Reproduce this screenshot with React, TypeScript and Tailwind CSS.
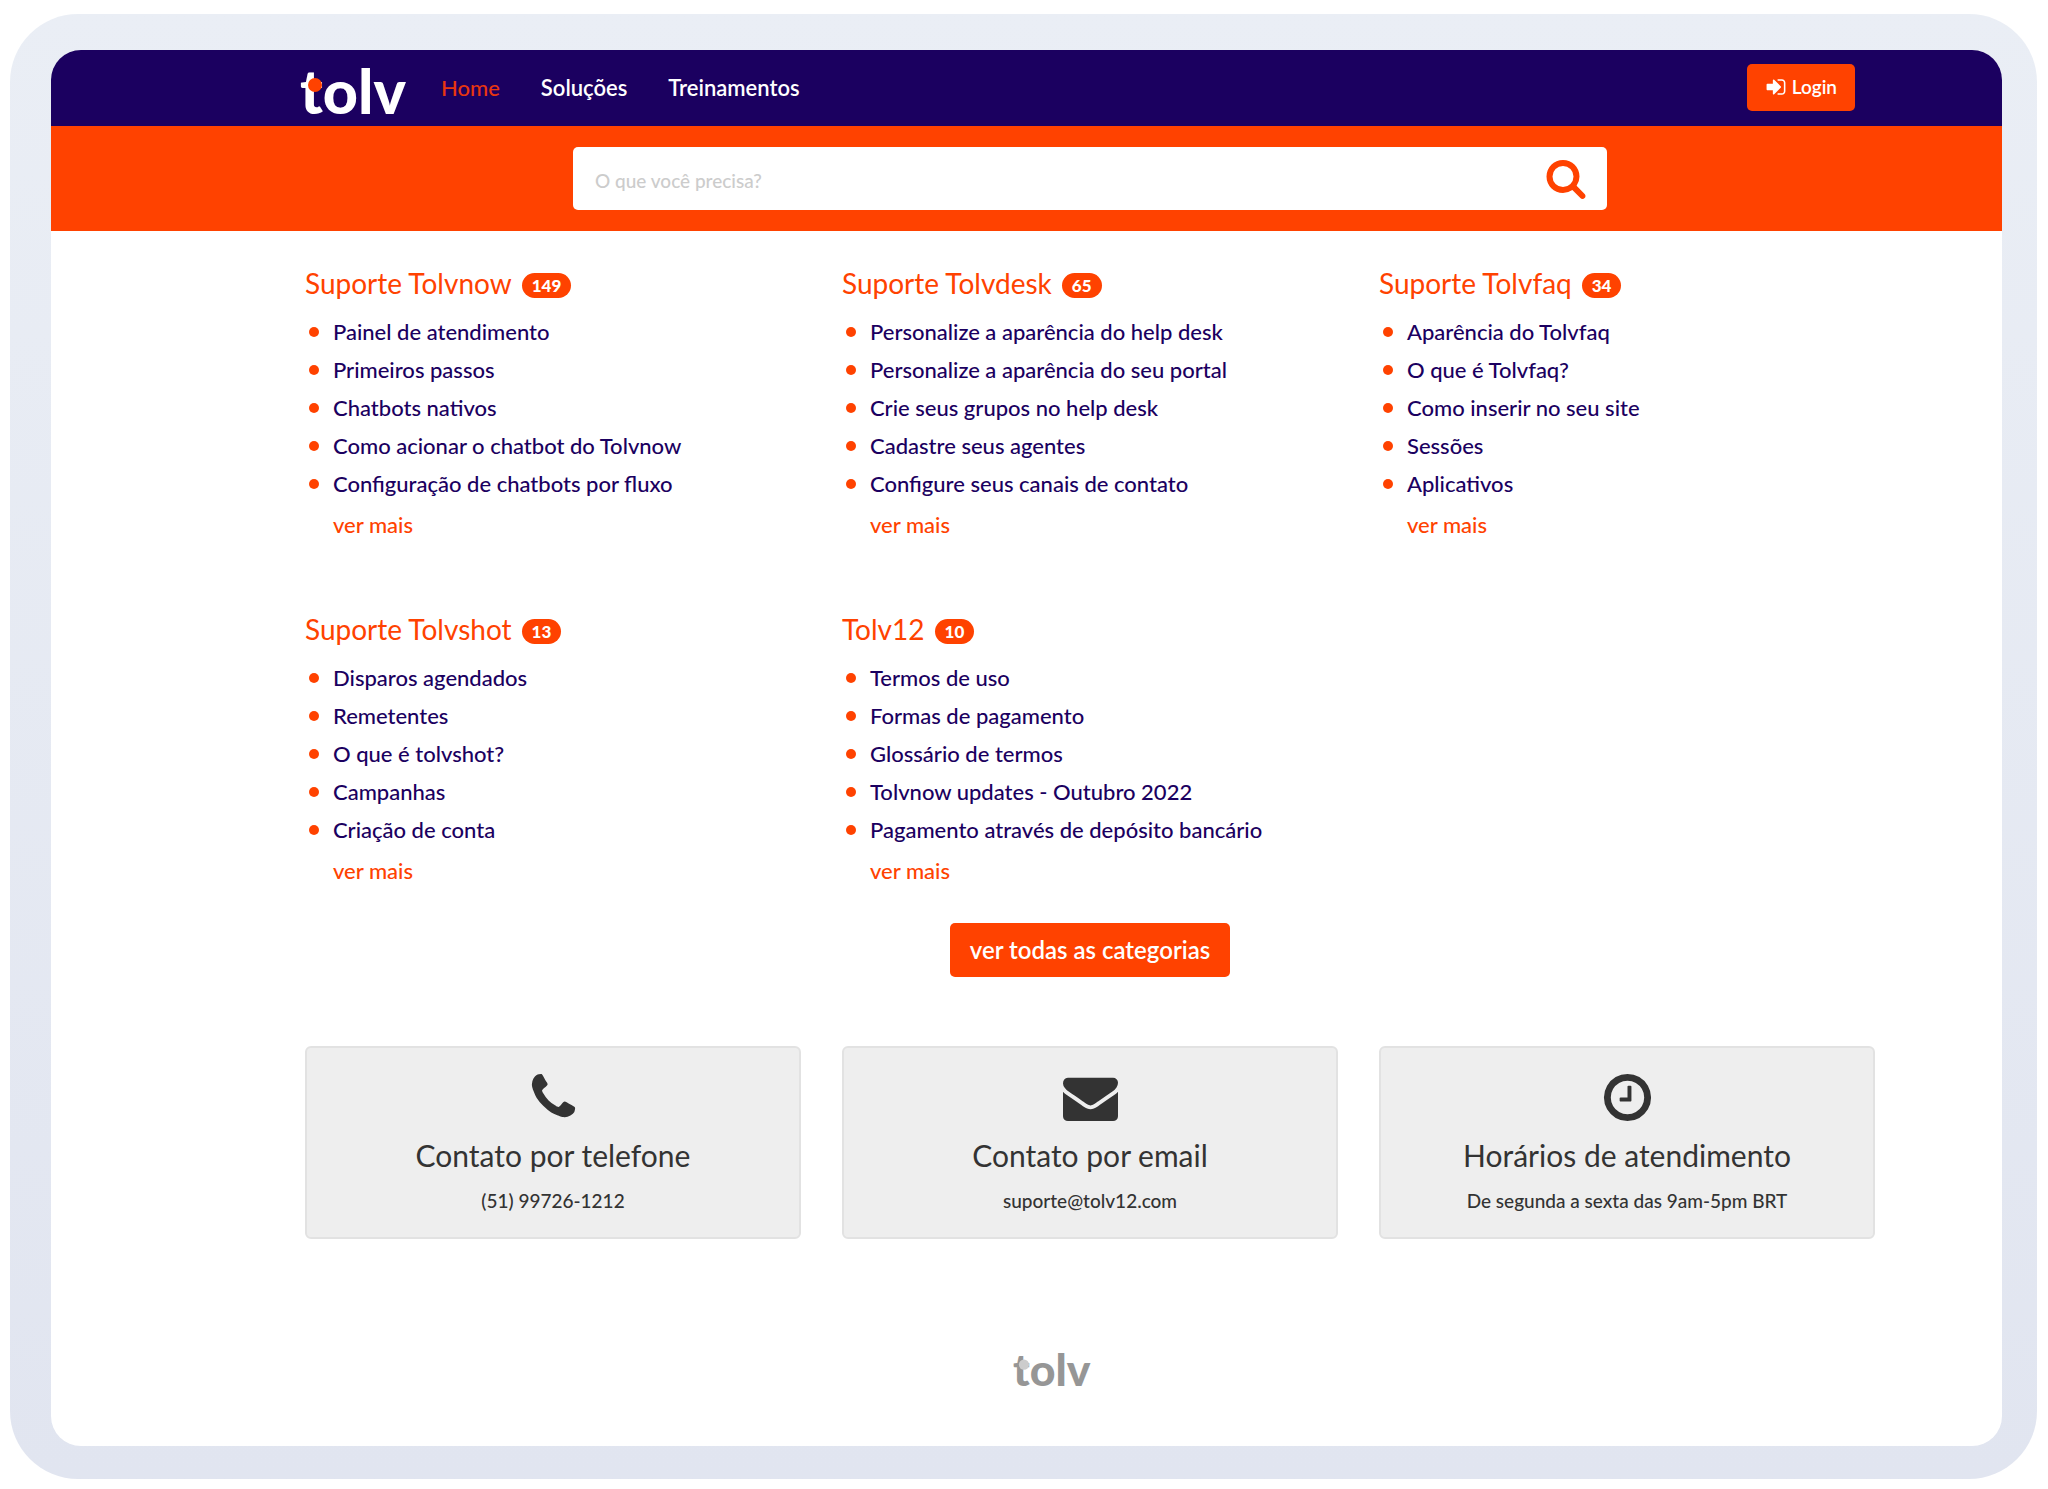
import type { ReactNode } from "react"

const navLinks = [
  { label: "Home", active: true },
  { label: "Soluções", active: false },
  { label: "Treinamentos", active: false },
]

const categories = [
  {
    title: "Suporte Tolvnow",
    count: 149,
    items: [
      "Painel de atendimento",
      "Primeiros passos",
      "Chatbots nativos",
      "Como acionar o chatbot do Tolvnow",
      "Configuração de chatbots por fluxo",
    ],
  },
  {
    title: "Suporte Tolvdesk",
    count: 65,
    items: [
      "Personalize a aparência do help desk",
      "Personalize a aparência do seu portal",
      "Crie seus grupos no help desk",
      "Cadastre seus agentes",
      "Configure seus canais de contato",
    ],
  },
  {
    title: "Suporte Tolvfaq",
    count: 34,
    items: [
      "Aparência do Tolvfaq",
      "O que é Tolvfaq?",
      "Como inserir no seu site",
      "Sessões",
      "Aplicativos",
    ],
  },
  {
    title: "Suporte Tolvshot",
    count: 13,
    items: [
      "Disparos agendados",
      "Remetentes",
      "O que é tolvshot?",
      "Campanhas",
      "Criação de conta",
    ],
  },
  {
    title: "Tolv12",
    count: 10,
    items: [
      "Termos de uso",
      "Formas de pagamento",
      "Glossário de termos",
      "Tolvnow updates - Outubro 2022",
      "Pagamento através de depósito bancário",
    ],
  },
]

function Icon({ d, className }: { d: string; className: string }) {
  return (
    <svg
      viewBox="0 0 1792 1792"
      fill="currentColor"
      aria-hidden="true"
      className={className}
    >
      <path d={d} />
    </svg>
  )
}

const signInPath =
  "M1312 896q0 26-19 45l-544 544q-19 19-45 19t-45-19-19-45v-288h-448q-26 0-45-19t-19-45v-384q0-26 19-45t45-19h448v-288q0-26 19-45t45-19 45 19l544 544q19 19 19 45zm352-352v704q0 119-84.5 203.5t-203.5 84.5h-320q-13 0-22.5-9.5t-9.5-22.5q0-4-1-20t-.5-26.5 3-23.5 10-19.5 20.5-6.5h320q66 0 113-47t47-113v-704q0-66-47-113t-113-47h-312l-11.5-1-11.5-3-8-5.5-7-9-2-13.5q0-4-1-20t-.5-26.5 3-23.5 10-19.5 20.5-6.5h320q119 0 203.5 84.5t84.5 203.5z"

const searchPath =
  "M1216 832q0-185-131.5-316.5t-316.5-131.5-316.5 131.5-131.5 316.5 131.5 316.5 316.5 131.5 316.5-131.5 131.5-316.5zm512 832q0 52-38 90t-90 38q-54 0-90-38l-343-342q-179 124-399 124-143 0-273.5-55.5t-225-150-150-225-55.5-273.5 55.5-273.5 150-225 225-150 273.5-55.5 273.5 55.5 225 150 150 225 55.5 273.5q0 220-124 399l343 343q37 37 37 90z"

const phonePath =
  "M1600 1240q0 27-10 70.5t-21 68.5q-21 50-122 106-94 51-186 51-27 0-53-3.5t-57.5-12.5-47-14.5-55.5-20.5-49-18q-98-35-175-83-127-79-264-216t-216-264q-48-77-83-175-3-9-18-49t-20.5-55.5-14.5-47-12.5-57.5-3.5-53q0-92 51-186 56-101 106-122 25-11 68.5-21t70.5-10q14 0 21 3 18 6 53 76 11 19 30 54t35 63.5 31 53.5q3 4 17.5 25t21.5 35.5 7 28.5q0 20-28.5 50t-62 55-62 53-28.5 46q0 9 5 22.5t8.5 20.5 14 24 11.5 19q76 137 174 235t235 174q2 1 19 11.5t24 14 20.5 8.5 22.5 5q18 0 46-28.5t53-62 55-62 50-28.5q14 0 28.5 7t35.5 21.5 25 17.5q25 15 53.5 31t63.5 35 54 30q70 35 76 53 3 7 3 21z"

const mailPath =
  "M1792 710v794q0 66-47 113t-113 47h-1472q-66 0-113-47t-47-113v-794q44 49 101 87 362 246 497 345 57 42 92.5 65.5t94.5 48 110 24.5h2q51 0 110-24.5t94.5-48 92.5-65.5q170-123 498-345 57-39 100-87zm0-294q0 79-49 151t-122 123q-376 261-468 325-10 7-42.5 31t-54 38.5-52 32.5-57.5 27-50 9h-2q-23 0-50-9t-57.5-27-52-32.5-54-38.5-42.5-31q-91-64-262-182.5t-205-142.5q-62-42-117-115.5t-55-136.5q0-78 41.5-130t118.5-52h1472q65 0 112.5 47t47.5 113z"

const clockPath =
  "M1024 544v448q0 14-9 23t-23 9h-320q-14 0-23-9t-9-23v-64q0-14 9-23t23-9h224v-352q0-14 9-23t23-9h64q14 0 23 9t9 23zm416 352q0-148-73-273t-198-198-273-73-273 73-198 198-73 273 73 273 198 198 273 73 273-73 198-198 73-273zm224 0q0 209-103 385.5t-279.5 279.5-385.5 103-385.5-103-279.5-279.5-103-385.5 103-385.5 279.5-279.5 385.5-103 385.5 103 279.5 279.5 103 385.5z"

function Logo({
  className,
  dotClassName,
}: {
  className: string
  dotClassName: string
}) {
  return (
    <svg viewBox="0 0 108 76" role="img" aria-label="tolv" className={className}>
      <text
        x="0"
        y="61"
        fontFamily="Lato, sans-serif"
        fontWeight="900"
        fontSize="61"
        fill="currentColor"
      >
        tolv
      </text>
      <circle cx="15" cy="32" r="7" className={dotClassName} />
    </svg>
  )
}

function Category({
  title,
  count,
  items,
}: {
  title: string
  count: number
  items: string[]
}) {
  return (
    <section>
      <h2 className="flex h-9 items-center text-[28px] text-[#ff4200]">
        <a href="#">{title}</a>
        <span className="mt-1 ml-[10px] rounded-full bg-[#ff4200] px-[10px] text-[17px] leading-[25px] font-black text-white">
          {count}
        </span>
      </h2>
      <ul className="mt-3 text-[22px] leading-[38px] font-medium text-[#1b0060]">
        {items.map((item) => (
          <li key={item} className="flex items-center">
            <span className="mr-[14px] ml-1 size-[10px] rounded-full bg-[#ff4200]" />
            <a href="#">{item}</a>
          </li>
        ))}
      </ul>
      <a
        href="#"
        className="mt-[3px] ml-7 inline-block text-[22px] leading-[38px] font-medium text-[#ff4200]"
      >
        ver mais
      </a>
    </section>
  )
}

function ContactCard({
  icon,
  title,
  children,
}: {
  icon: string
  title: string
  children: ReactNode
}) {
  return (
    <div className="flex flex-col items-center rounded-md border-2 border-[#e2e2e2] bg-[#eeeeee] pt-[22px] pb-5 text-[#333333]">
      <Icon d={icon} className="size-[55px]" />
      <h3 className="mt-[10px] text-[30px] leading-10">{title}</h3>
      <p className="mt-[10px] text-[19px] leading-8 font-medium">{children}</p>
    </div>
  )
}

export default function App() {
  return (
    <div className="bg-white pt-[14px] pr-[11px] pb-[10px] pl-[10px] font-['Lato',sans-serif]">
      <div className="rounded-[68px] bg-linear-to-b from-[#eaeef5] to-[#e1e5f0] pt-9 pr-[35px] pb-[33px] pl-[41px]">
        <div className="overflow-hidden rounded-[30px] bg-white">
          <header className="flex h-[76px] items-center bg-[#1b0060] pr-[147px] pb-[2px] pl-[249px]">
            <a href="#" className="mt-2">
              <Logo
                className="h-[76px] w-[108px] text-white"
                dotClassName="fill-[#ff4200]"
              />
            </a>
            <nav className="ml-[33px] flex gap-[41px] text-[22px] font-medium">
              {navLinks.map((link) => (
                <a
                  key={link.label}
                  href="#"
                  className={
                    link.active ? "text-[#e8360f]" : "font-semibold text-white"
                  }
                >
                  {link.label}
                </a>
              ))}
            </nav>
            <button className="ml-auto flex h-[47px] items-center gap-[5px] rounded-[5px] bg-[#ff4200] px-[18px] text-[19px] font-semibold text-white">
              <Icon d={signInPath} className="size-[22px]" />
              Login
            </button>
          </header>

          <div className="flex justify-center bg-[#ff4200] py-[21px] pr-[127px] pl-[254px]">
            <form className="flex h-[63px] w-full max-w-[1034px] items-center rounded-[5px] bg-white pr-5 pl-[22px]">
              <input
                type="search"
                aria-label="O que você precisa?"
                placeholder="O que você precisa?"
                className="min-w-0 flex-1 pt-[6px] text-[19px] font-medium outline-none placeholder:text-[#cccccc]"
              />
              <button aria-label="Buscar" className="pb-[2px] text-[#ff4200]">
                <Icon d={searchPath} className="size-[42px]" />
              </button>
            </form>
          </div>

          <main className="pt-[34px] pr-[127px] pl-[254px]">
            <div className="grid grid-cols-3 gap-x-[41px] gap-y-[67px]">
              {categories.map((category) => (
                <Category key={category.title} {...category} />
              ))}
            </div>

            <div className="mt-[33px] flex justify-center">
              <button className="h-[54px] rounded-[5px] bg-[#ff4200] px-5 text-[24px] font-semibold text-white">
                ver todas as categorias
              </button>
            </div>

            <div className="mt-[69px] grid grid-cols-3 gap-x-[41px]">
              <ContactCard icon={phonePath} title="Contato por telefone">
                (51) 99726-1212
              </ContactCard>
              <ContactCard icon={mailPath} title="Contato por email">
                suporte@tolv12.com
              </ContactCard>
              <ContactCard icon={clockPath} title="Horários de atendimento">
                De segunda a sexta das 9am-5pm BRT
              </ContactCard>
            </div>
          </main>

          <footer className="flex justify-center pt-[102px] pb-[49px] pl-[52px]">
            <Logo
              className="h-14 w-[79px] text-[#969696]"
              dotClassName="fill-[#cccccc]"
            />
          </footer>
        </div>
      </div>
    </div>
  )
}
